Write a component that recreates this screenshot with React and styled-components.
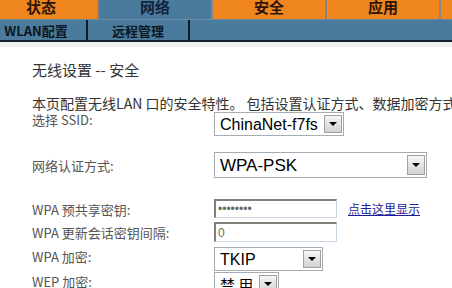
import React from 'react';
import styled, { createGlobalStyle } from 'styled-components';

const GlobalStyle = createGlobalStyle`
  html, body {
    margin: 0;
    padding: 0;
    background: #fff;
    overflow: hidden;
  }
  body {
    font-family: "Noto Sans CJK SC", "Noto Sans", sans-serif;
  }
`;

const Page = styled.div`
  width: 452px;
  height: 288px;
  overflow: hidden;
`;

const TopNav = styled.div`
  display: flex;
  height: 19px;
  margin-left: -15px;
  background: #8c8478;
`;

const Tab = styled.div`
  flex: none;
  width: 112px;
  margin-right: 2px;
  height: 19px;
  line-height: 14px;
  text-align: center;
  font-size: 15px;
  font-weight: bold;
  background: ${(p) => (p.$active ? '#4a7b9d' : '#f0861f')};
  color: ${(p) => (p.$active ? '#14233a' : '#2e1406')};
  overflow: hidden;
`;

const SubNav = styled.div`
  display: flex;
  height: 20px;
  margin-left: -14px;
  background: #4a7b9d;
  border-top: 1px solid #6a8aa2;
  border-bottom: 2px solid #17202c;
`;

const SubItem = styled.div`
  flex: none;
  width: 100px;
  line-height: 22px;
  text-align: center;
  font-size: 13px;
  font-weight: bold;
  color: #0c1622;
  border-right: 2px solid #121a24;
`;

const Strip = styled.div`
  height: 5px;
  background: #eff1f1;
`;

const Content = styled.div`
  padding-left: 32px;
  white-space: nowrap;
`;

const Title = styled.div`
  margin-top: 13px;
  font-size: 15px;
  line-height: 20px;
  color: #333;
`;

const Desc = styled.div`
  margin-top: 14px;
  font-size: 14px;
  line-height: 18px;
  color: #333;
  height: 18px;
`;

const Row = styled.div`
  display: flex;
  align-items: flex-start;
  margin-top: ${(p) => p.$mt}px;
  height: ${(p) => p.$h}px;
`;

const Label = styled.div`
  width: 182px;
  flex: none;
  padding-top: ${(p) => p.$pt}px;
  font-size: 13px;
  line-height: 16px;
  color: #555;
`;

const SelectBox = styled.div`
  display: flex;
  align-items: stretch;
  box-sizing: border-box;
  width: ${(p) => p.$w}px;
  height: ${(p) => p.$h}px;
  padding: 2px 1px 2px 2px;
  border: 1px solid #a5acb2;
  background: #fff;
`;

const SelectText = styled.span`
  flex: 1;
  padding-left: 3px;
  font-family: ${(p) => (p.$cjk ? '"Noto Sans CJK SC", sans-serif' : '"Liberation Sans", Arial, sans-serif')};
  font-size: ${(p) => p.$fs || 16}px;
  line-height: ${(p) => p.$h - 4}px;
  color: #000;
  overflow: hidden;
`;

const ArrowBtn = styled.span`
  flex: none;
  width: 18px;
  box-sizing: border-box;
  display: flex;
  align-items: center;
  justify-content: center;
  border: 1px solid #a0a0a0;
  background: linear-gradient(#f6f6f6, #d2d2d2);
`;

const Triangle = styled.span`
  width: 0;
  height: 0;
  border-left: 4px solid transparent;
  border-right: 4px solid transparent;
  border-top: 4px solid #000;
`;

const TextInput = styled.input`
  box-sizing: border-box;
  width: 123px;
  height: ${(p) => p.$h}px;
  margin: 0;
  padding: 0 2px;
  border-style: solid;
  border-width: 2px 1px 1px 2px;
  border-color: #808080 #c9d8e4 #c9d8e4 #808080;
  background: #fff;
  font-family: "Liberation Sans", Arial, sans-serif;
  font-size: 12px;
  color: #666;
  outline: none;
`;

const ShowLink = styled.a`
  margin-left: 11px;
  padding-top: 2px;
  font-size: 12px;
  line-height: 16px;
  color: #1c1c9c;
  text-decoration: underline;
`;

const Select = ({ w, h, fs, cjk, children }) => (
  <SelectBox $w={w} $h={h}>
    <SelectText $h={h} $fs={fs} $cjk={cjk}>{children}</SelectText>
    <ArrowBtn><Triangle /></ArrowBtn>
  </SelectBox>
);

export default function App() {
  return (
    <Page>
      <GlobalStyle />
      <TopNav>
        <Tab>状态</Tab>
        <Tab $active>网络</Tab>
        <Tab>安全</Tab>
        <Tab>应用</Tab>
        <Tab>管理</Tab>
      </TopNav>
      <SubNav>
        <SubItem>WLAN配置</SubItem>
        <SubItem>远程管理</SubItem>
      </SubNav>
      <Strip />
      <Content>
        <Title>无线设置 -- 安全</Title>
        <Desc>本页配置无线LAN 口的安全特性。 包括设置认证方式、数据加密方式、是否需要密码验证等。</Desc>

        <Row $mt={0} $h={24}>
          <Label $pt={0}>选择 SSID:</Label>
          <Select w={130} h={24}>ChinaNet-f7fs</Select>
        </Row>
        <Row $mt={16} $h={26}>
          <Label $pt={6}>网络认证方式:</Label>
          <Select w={213} h={26} fs={17}>WPA-PSK</Select>
        </Row>
        <Row $mt={21} $h={19}>
          <Label $pt={3}>WPA 预共享密钥:</Label>
          <TextInput type="password" readOnly defaultValue="12345678" $h={19} />
          <ShowLink href="#">点击这里显示</ShowLink>
        </Row>
        <Row $mt={4} $h={20}>
          <Label $pt={3}>WPA 更新会话密钥间隔:</Label>
          <TextInput type="text" readOnly defaultValue="0" $h={20} />
        </Row>
        <Row $mt={5} $h={24}>
          <Label $pt={2}>WPA 加密:</Label>
          <Select w={109} h={24}>TKIP</Select>
        </Row>
        <Row $mt={1} $h={24}>
          <Label $pt={2}>WEP 加密:</Label>
          <Select w={65} h={24} fs={15} cjk>禁 用</Select>
        </Row>
      </Content>
    </Page>
  );
}
